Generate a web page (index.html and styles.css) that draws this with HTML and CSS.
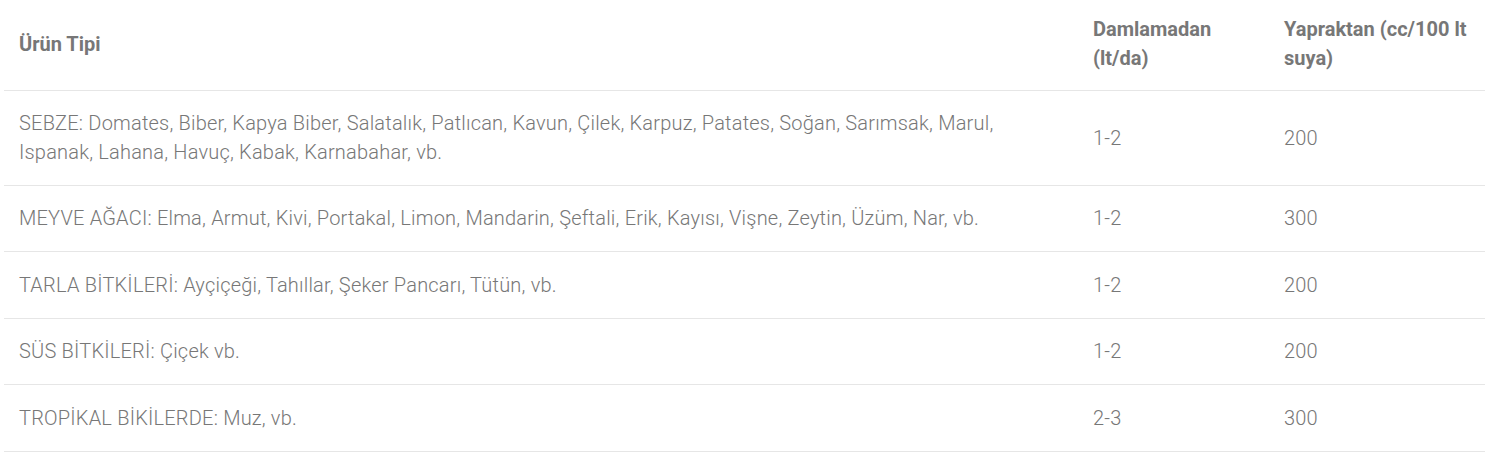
FILE: index.html
```html
<!DOCTYPE html>
<html lang="tr">
<head>
<meta charset="utf-8">
<title>Ürün Tablosu</title>
<link rel="stylesheet" href="styles.css">
</head>
<body>
<table class="dose-table">
  <colgroup>
    <col class="col-type">
    <col class="col-drip">
    <col class="col-leaf">
  </colgroup>
  <thead>
    <tr>
      <th>Ürün Tipi</th>
      <th>Damlamadan (lt/da)</th>
      <th>Yapraktan (cc/100 lt suya)</th>
    </tr>
  </thead>
  <tbody>
    <tr>
      <td>SEBZE: Domates, Biber, Kapya Biber, Salatalık, Patlıcan, Kavun, Çilek, Karpuz, Patates, Soğan, Sarımsak, Marul, Ispanak, Lahana, Havuç, Kabak, Karnabahar, vb.</td>
      <td>1-2</td>
      <td>200</td>
    </tr>
    <tr>
      <td>MEYVE AĞACI: Elma, Armut, Kivi, Portakal, Limon, Mandarin, Şeftali, Erik, Kayısı, Vişne, Zeytin, Üzüm, Nar, vb.</td>
      <td>1-2</td>
      <td>300</td>
    </tr>
    <tr>
      <td>TARLA BİTKİLERİ: Ayçiçeği, Tahıllar, Şeker Pancarı, Tütün, vb.</td>
      <td>1-2</td>
      <td>200</td>
    </tr>
    <tr>
      <td>SÜS BİTKİLERİ: Çiçek vb.</td>
      <td>1-2</td>
      <td>200</td>
    </tr>
    <tr>
      <td>TROPİKAL BİKİLERDE: Muz, vb.</td>
      <td>2-3</td>
      <td>300</td>
    </tr>
  </tbody>
</table>
</body>
</html>
```
FILE: styles.css
```css
html, body {
  margin: 0;
  padding: 0;
  background: #ffffff;
}

body {
  padding-left: 4px;
  font-family: Roboto, "Liberation Sans", Arial, sans-serif;
  color: #777777;
}

.dose-table {
  width: 1481px;
  table-layout: fixed;
  border-collapse: collapse;
  font-size: 20px;
  line-height: 29px;
}

.col-type { width: 1074px; }
.col-drip { width: 191px; }
.col-leaf { width: 216px; }

.dose-table th {
  text-align: left;
  font-weight: 700;
  padding: 15px 15px 17px;
  border-bottom: 1px solid #e6e6e6;
  vertical-align: middle;
}

.dose-table tbody tr {
  height: 66.5px;
}

.dose-table td {
  font-weight: 300;
  letter-spacing: 0.2px;
  padding: 18px 15px 17.5px;
  border-bottom: 1px solid #e6e6e6;
  vertical-align: middle;
}
```
